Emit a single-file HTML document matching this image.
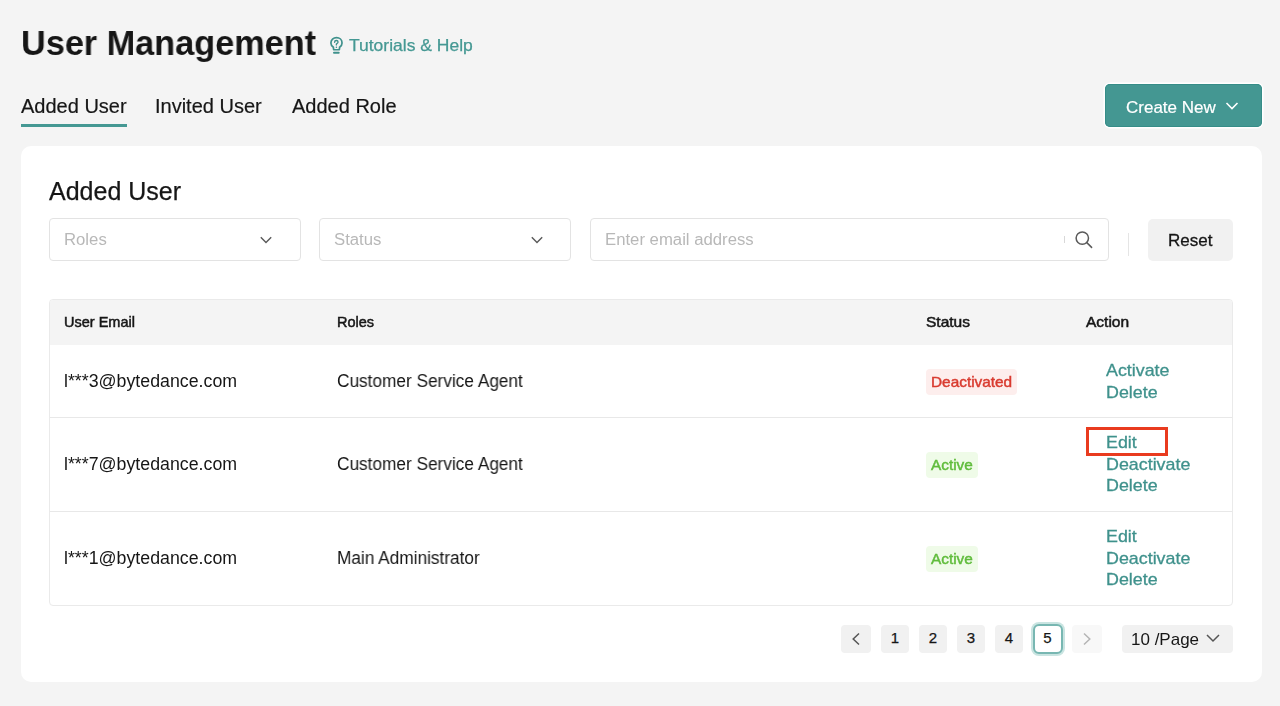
<!DOCTYPE html>
<html>
<head>
<meta charset="utf-8">
<style>
*{box-sizing:border-box;margin:0;padding:0}
html,body{width:1280px;height:706px;overflow:hidden;background:#f4f4f4;font-family:"Liberation Sans",sans-serif;color:#161616}
.a{position:absolute;white-space:nowrap;line-height:1;will-change:transform}
.teal{color:#459893}
.card{position:absolute;left:21px;top:146px;width:1241px;height:536px;background:#fff;border-radius:10px}
.sel{position:absolute;top:218px;height:43px;border:1px solid #e3e3e3;border-radius:4px;background:#fff}
.ph{color:#b8b8b8;font-size:16px;transform:scaleX(1.045);transform-origin:0 0}
.tbl{position:absolute;left:49px;top:299px;width:1184px;height:307px;border:1px solid #eaeaea;border-radius:4px;overflow:hidden}
.hdr{position:absolute;left:0;top:0;width:100%;height:45px;background:#f4f4f4}
.hline{position:absolute;left:0;width:100%;height:1px;background:#e8e8e8}
.th{font-size:14.5px;font-weight:400;color:#161616;-webkit-text-stroke:0.5px #161616}
.td{font-size:17.5px;color:#161616;transform:scaleX(1.015);transform-origin:0 0}
.tr{font-size:17.5px;color:#161616;transform:scaleX(0.985);transform-origin:0 0}
.act{font-size:17px;color:#3f918c;line-height:21.5px;transform:scaleX(1.05);transform-origin:0 0;-webkit-text-stroke:0.3px #3f918c}
.badge{position:absolute;height:25.5px;border-radius:4px}
.bt{position:absolute;left:4.5px;top:5.8px;font-size:14.5px;line-height:1;white-space:nowrap;transform:scaleX(1.06);transform-origin:0 0;will-change:transform}
.pg{position:absolute;top:625px;width:28px;height:28px;border-radius:4px;background:#f1f1f1;font-size:15px;text-align:center;line-height:26px;color:#161616;-webkit-text-stroke:0.25px #161616}
</style>
</head>
<body>
<!-- Header -->
<div class="a" style="left:20.5px;top:26px;font-size:35.5px;font-weight:700;color:#161616;transform:scaleX(0.965);transform-origin:0 0">User Management</div>
<svg style="position:absolute;left:326px;top:34px" width="22" height="23" viewBox="0 0 22 23">
  <path d="M7.65 15.75 L7.4 13.3 C5.9 12.2 4.9 10.7 4.9 8.9 C4.9 5.9 7.4 3.6 10.5 3.6 C13.6 3.6 16.05 5.9 16.05 8.9 C16.05 10.7 15.1 12.2 13.6 13.3 L13.35 15.75 Z" fill="none" stroke="#3f918c" stroke-width="1.7" stroke-linejoin="round"/>
  <rect x="7" y="17.75" width="6.7" height="2.1" rx="1" fill="#3f918c"/>
  <path d="M8.6 8.3 C8.6 7.2 9.4 6.5 10.35 6.5 C11.3 6.5 12.05 7.2 12.05 8.1 C12.05 9.1 11.05 9.4 10.4 10.1 L10.4 10.9" fill="none" stroke="#3f918c" stroke-width="1.35" stroke-linecap="round"/>
  <circle cx="10.4" cy="13.25" r="0.75" fill="#3f918c"/>
</svg>
<div class="a teal" style="left:349px;top:37.2px;font-size:16.5px;transform:scaleX(1.06);transform-origin:0 0;-webkit-text-stroke:0.25px #459893">Tutorials &amp; Help</div>

<!-- Tabs -->
<div class="a" style="left:21px;top:95.7px;font-size:20px;-webkit-text-stroke:0.2px #161616">Added User</div>
<div style="position:absolute;left:21px;top:124px;width:106px;height:3px;background:#459893"></div>
<div class="a" style="left:155px;top:95.7px;font-size:20px;-webkit-text-stroke:0.2px #161616">Invited User</div>
<div class="a" style="left:292px;top:95.7px;font-size:20px;-webkit-text-stroke:0.2px #161616">Added Role</div>

<!-- Create New -->
<div style="position:absolute;left:1105px;top:84px;width:157px;height:43px;background:#449792;border-radius:5px;box-shadow:inset 0 0 0 1px #368d88,0 0 0 1.5px #ffffff"></div>
<div class="a" style="left:1126px;top:98.5px;font-size:17px;color:#fff;-webkit-text-stroke:0.2px #fff">Create New</div>
<svg style="position:absolute;left:1225px;top:101px" width="14" height="10" viewBox="0 0 14 10">
  <path d="M1.5 2 L7 7.5 L12.5 2" fill="none" stroke="#fff" stroke-width="1.6"/>
</svg>

<!-- Card -->
<div class="card"></div>
<div class="a" style="left:49px;top:178.6px;font-size:25px;-webkit-text-stroke:0.25px #161616">Added User</div>

<div class="sel" style="left:49px;width:252px"></div>
<div class="a ph" style="left:64px;top:231.8px">Roles</div>
<svg style="position:absolute;left:259px;top:234px" width="14" height="12" viewBox="0 0 14 12">
  <path d="M1.8 3.2 L7 8.4 L12.2 3.2" fill="none" stroke="#5a5a5a" stroke-width="1.45"/>
</svg>

<div class="sel" style="left:319px;width:252px"></div>
<div class="a ph" style="left:334px;top:231.8px">Status</div>
<svg style="position:absolute;left:529.5px;top:234px" width="14" height="12" viewBox="0 0 14 12">
  <path d="M1.8 3.2 L7 8.4 L12.2 3.2" fill="none" stroke="#5a5a5a" stroke-width="1.45"/>
</svg>

<div class="sel" style="left:590px;width:519px"></div>
<div class="a ph" style="left:605px;top:231.8px">Enter email address</div>
<div style="position:absolute;left:1064px;top:236px;width:1px;height:7px;background:#d8d8d8"></div>
<svg style="position:absolute;left:1072px;top:228px" width="24" height="24" viewBox="0 0 24 24">
  <circle cx="10.3" cy="10.1" r="6.2" fill="none" stroke="#5a5a5a" stroke-width="1.5"/>
  <path d="M14.8 14.6 L19.6 19.4" stroke="#5a5a5a" stroke-width="1.5" stroke-linecap="round"/>
</svg>
<div style="position:absolute;left:1128px;top:233px;width:1px;height:23px;background:#e5e5e5"></div>
<div style="position:absolute;left:1148px;top:218.5px;width:85px;height:42.5px;background:#f1f1f1;border-radius:5px"></div>
<div class="a" style="left:1168px;top:231.7px;font-size:17px;-webkit-text-stroke:0.3px #161616">Reset</div>

<!-- Table -->
<div class="tbl">
  <div class="hdr"></div>
  <div class="hline" style="top:117px"></div>
  <div class="hline" style="top:211px"></div>
</div>
<div class="a th" style="left:64px;top:315.3px">User Email</div>
<div class="a th" style="left:337px;top:315.3px">Roles</div>
<div class="a th" style="left:926px;top:315.3px;transform:scaleX(1.07);transform-origin:0 0">Status</div>
<div class="a th" style="left:1086px;top:315.3px;transform:scaleX(1.07);transform-origin:0 0">Action</div>

<!-- Row 1 -->
<div class="a td" style="left:64px;top:373.2px">l***3@bytedance.com</div>
<div class="a tr" style="left:337px;top:373.2px">Customer Service Agent</div>
<div class="badge" style="left:926px;top:369px;width:90.5px;background:#fdeeed"><span class="bt" style="color:#d93b30;-webkit-text-stroke:0.45px #d93b30">Deactivated</span></div>
<div class="a act" style="left:1106px;top:359.7px">Activate<br>Delete</div>

<!-- Row 2 -->
<div class="a td" style="left:64px;top:456.2px">l***7@bytedance.com</div>
<div class="a tr" style="left:337px;top:456.2px">Customer Service Agent</div>
<div class="badge" style="left:926px;top:452px;width:51.5px;background:#effbe8"><span class="bt" style="color:#60bc3c;-webkit-text-stroke:0.45px #60bc3c">Active</span></div>
<div style="position:absolute;left:1086px;top:427px;width:82px;height:29px;border:3px solid #e93b1f"></div>
<div class="a act" style="left:1106px;top:432.3px">Edit<br>Deactivate<br>Delete</div>

<!-- Row 3 -->
<div class="a td" style="left:64px;top:550.2px">l***1@bytedance.com</div>
<div class="a tr" style="left:337px;top:550.2px">Main Administrator</div>
<div class="badge" style="left:926px;top:546px;width:51.5px;background:#effbe8"><span class="bt" style="color:#60bc3c;-webkit-text-stroke:0.45px #60bc3c">Active</span></div>
<div class="a act" style="left:1106px;top:526px">Edit<br>Deactivate<br>Delete</div>

<!-- Pagination -->
<div class="pg" style="left:841px;width:30px"></div>
<svg style="position:absolute;left:849px;top:631px" width="14" height="16" viewBox="0 0 14 16">
  <path d="M10 2.5 L4.2 8 L10 13.5" fill="none" stroke="#555" stroke-width="1.5"/>
</svg>
<div class="pg" style="left:881px">1</div>
<div class="pg" style="left:919px">2</div>
<div class="pg" style="left:957px">3</div>
<div class="pg" style="left:995px">4</div>
<div class="pg" style="left:1033px;top:624px;width:30px;height:30px;background:#fff;border:2px solid #78b7b2;box-shadow:0 0 0 2px #c9e4e1;border-radius:6px;line-height:23px;padding-right:1px">5</div>
<div class="pg" style="left:1072px;width:30px;background:#f8f8f8"></div>
<svg style="position:absolute;left:1080px;top:631px" width="14" height="16" viewBox="0 0 14 16">
  <path d="M4 2.5 L9.8 8 L4 13.5" fill="none" stroke="#b5b5b5" stroke-width="1.5"/>
</svg>
<div style="position:absolute;left:1122px;top:625px;width:111px;height:28px;background:#f1f1f1;border-radius:4px"></div>
<div class="a" style="left:1131px;top:631px;font-size:17px">10 /Page</div>
<svg style="position:absolute;left:1205px;top:632px" width="16" height="12" viewBox="0 0 16 12">
  <path d="M2 3 L8 9 L14 3" fill="none" stroke="#555" stroke-width="1.5"/>
</svg>
</body>
</html>
